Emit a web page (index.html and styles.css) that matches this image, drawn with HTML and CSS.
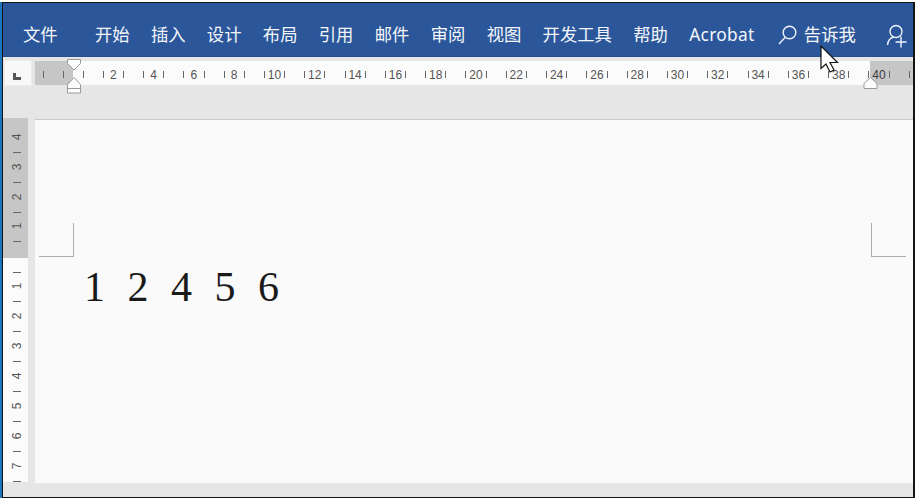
FILE: index.html
```html
<!DOCTYPE html>
<html lang="zh-CN">
<head>
<meta charset="utf-8">
<title>Word</title>
<link rel="stylesheet" href="styles.css">
</head>
<body>
<div class="shell">
  <div class="window">
    <nav class="tabs">
      <span class="tab tab-file">文件</span>
      <span class="tab">开始</span>
      <span class="tab">插入</span>
      <span class="tab">设计</span>
      <span class="tab">布局</span>
      <span class="tab">引用</span>
      <span class="tab">邮件</span>
      <span class="tab">审阅</span>
      <span class="tab">视图</span>
      <span class="tab">开发工具</span>
      <span class="tab">帮助</span>
      <span class="tab tab-latin">Acrobat</span>
      <span class="tell">
        <svg class="icon-search" viewBox="0 0 20 20" width="20" height="20"><circle cx="11.500" cy="7.500" r="6.300"/><path d="M7 12.500L1 19"/></svg>
        <span class="tab">告诉我</span>
      </span>
      <svg class="icon-person" viewBox="0 0 24 24" width="24" height="24"><circle cx="10" cy="7.500" r="6"/><path d="M1.500 21c.5-4.500 3-7 6-7.700M15 12.500v11M9.500 18h11"/></svg>
    </nav>
    <div class="ruler-row">
      <div class="tabstop"><span class="tabstop-mark"></span></div>
      <svg class="hruler" viewBox="35 57 878 61" width="878" height="61">
        <rect class="r-white" x="35" y="61" width="835" height="24"/>
        <rect class="r-gray" x="35" y="61" width="38" height="24"/>
        <rect class="r-gray" x="870" y="61" width="43" height="24"/>
        <path class="r-tick" d="M43.500 71v7M63.500 71v7M83.500 71v7M103.500 71v7M123.500 71v7M143.500 71v7M163.500 71v7M183.500 71v7M204.500 71v7M224.500 71v7M244.500 71v7M264.500 71v7M284.500 71v7M304.500 71v7M324.500 71v7M345.500 71v7M365.500 71v7M385.500 71v7M405.500 71v7M425.500 71v7M445.500 71v7M465.500 71v7M486.500 71v7M506.500 71v7M526.500 71v7M546.500 71v7M566.500 71v7M586.500 71v7M607.500 71v7M627.500 71v7M647.500 71v7M667.500 71v7M687.500 71v7M707.500 71v7M727.500 71v7M748.500 71v7M768.500 71v7M788.500 71v7M808.500 71v7M828.500 71v7M848.500 71v7M868.500 71v7M889.500 71v7M909.500 71v7"/>
        <g class="r-num">
          <text x="113.300" y="78.500">2</text><text x="153.600" y="78.500">4</text><text x="193.900" y="78.500">6</text><text x="234.200" y="78.500">8</text><text x="274.500" y="78.500">10</text><text x="314.800" y="78.500">12</text><text x="355.100" y="78.500">14</text><text x="395.400" y="78.500">16</text><text x="435.700" y="78.500">18</text><text x="476" y="78.500">20</text><text x="516.300" y="78.500">22</text><text x="556.600" y="78.500">24</text><text x="596.900" y="78.500">26</text><text x="637.200" y="78.500">28</text><text x="677.500" y="78.500">30</text><text x="717.800" y="78.500">32</text><text x="758.100" y="78.500">34</text><text x="798.400" y="78.500">36</text><text x="838.700" y="78.500">38</text><text class="r-num-dark" x="879" y="78.500">40</text>
        </g>
        <path class="r-marker" d="M67.500 59.500h13v4l-6.500 6.500l-6.500-6.500z"/>
        <path class="r-marker" d="M74 77.500l6.500 7v8.500h-13v-8.500z"/>
        <path class="r-marker" d="M67.500 88.500h13"/>
        <path class="r-marker" d="M870.500 77.500l6.500 6v5h-13v-5z"/>
      </svg>
    </div>
    <div class="main">
      <svg class="vruler" viewBox="3 118 25 364" width="25" height="364">
        <rect class="r-white" x="3" y="118" width="25" height="364"/>
        <rect class="r-gray" x="3" y="118" width="25" height="140"/>
        <path class="r-tick" d="M13 152.500h8M13 182.500h8M13 212.500h8M13 241.500h8M13 272.500h8M13 301.500h8M13 331.500h8M13 361.500h8M13 391.500h8M13 421.500h8M13 451.500h8M13 481.500h8"/>
        <g class="r-num">
          <text transform="translate(21 137) rotate(-90)">4</text>
          <text transform="translate(21 167) rotate(-90)">3</text>
          <text transform="translate(21 197) rotate(-90)">2</text>
          <text transform="translate(21 226) rotate(-90)">1</text>
          <text transform="translate(21 286) rotate(-90)">1</text>
          <text transform="translate(21 316) rotate(-90)">2</text>
          <text transform="translate(21 346) rotate(-90)">3</text>
          <text transform="translate(21 376) rotate(-90)">4</text>
          <text transform="translate(21 406) rotate(-90)">5</text>
          <text transform="translate(21 436) rotate(-90)">6</text>
          <text transform="translate(21 466) rotate(-90)">7</text>
        </g>
      </svg>
      <div class="page">
        <div class="crops">
          <span class="crop crop-left"></span>
          <span class="crop crop-right"></span>
        </div>
        <div class="digits">
          <span>1</span><span>2</span><span>4</span><span>5</span><span>6</span>
        </div>
      </div>
    </div>
  </div>
</div>
<svg class="cursor" viewBox="0 0 20 30" width="20" height="30"><path d="M1 1v22.500l5-4.500l4 8l4-2l-4-7.500h7.500z"/></svg>
</body>
</html>
```
FILE: styles.css
```css
* { box-sizing: border-box; }
html, body { margin: 0; padding: 0; background: #fff; }
body { width: 916px; height: 500px; overflow: hidden; position: relative; }

.shell {
  width: 915px;
  height: 496px;
  margin-top: 2px;
  border-left: 2px solid #1b76bd;
}
.window {
  width: 913px;
  height: 496px;
  border: 1px solid #141414;
  border-right-width: 2px;
  background: #e6e6e6;
  display: flex;
  flex-direction: column;
}

.tabs {
  height: 54px;
  flex: none;
  background: #2b579a;
  border-bottom: 1px solid #26508f;
  display: flex;
  align-items: center;
  gap: 21.300px;
  padding: 8px 0 0 20px;
  color: #f4f6fa;
  font: 17.330px/24px "Noto Sans CJK SC", "Noto Sans", sans-serif;
}
.tab { white-space: nowrap; }
.tab-file { margin-right: 16px; }
.tab-latin { font-family: "Noto Sans", sans-serif; letter-spacing: 0.300px; }
.tell { display: flex; align-items: center; gap: 6px; margin-left: 2px; }
.icon-search { fill: none; stroke: #f0f3f8; stroke-width: 1.400; margin-top: 2px; }
.icon-person { fill: none; stroke: #f0f3f8; stroke-width: 1.400; margin: 5px 0 0 8.700px; }

.ruler-row { display: flex; height: 61px; flex: none; position: relative; }
.tabstop {
  width: 28px;
  height: 26px;
  margin: 3px 0 0 1px;
  background: #f8f8f8;
  border: 1px solid #eee;
  position: relative;
  flex: none;
}
.tabstop-mark {
  display: block;
  width: 8px;
  height: 7px;
  margin: 12px 0 0 8px;
  border-left: 3px solid #555;
  border-bottom: 3px solid #555;
}
.hruler { margin-left: 3px; display: block; flex: none; overflow: visible; }

.r-white { fill: #fbfbfb; }
.r-gray { fill: #c6c6c6; }
.r-tick { fill: none; stroke: #666; stroke-width: 1; }
.r-num { font: 12px "Liberation Sans", sans-serif; fill: #555; text-anchor: middle; }
.r-num-dark { fill: #3c3c3c; }
.r-marker { fill: #fdfdfd; stroke: #9a9a9a; stroke-width: 1; }

.main { display: flex; flex: none; height: 379px; }
.vruler { display: block; flex: none; margin-right: 7px; }
.page {
  flex: 1;
  height: 364px;
  background: #fafafa;
  border-top: 1px solid #c9c9c9;
  margin-top: 1px;
  padding-top: 103px;
}
.crops {
  display: flex;
  justify-content: space-between;
  padding: 0 7px 0 4px;
}
.crop { display: block; width: 35px; height: 34px; border-bottom: 1px solid #ababab; }
.crop-left { border-right: 1px solid #ababab; }
.crop-right { border-left: 1px solid #ababab; }
.digits {
  display: flex;
  gap: 22.500px;
  margin: 6px 0 0 49px;
  font: 42px/48px "Liberation Serif", serif;
  color: #1a1a1a;
}

.cursor { position: absolute; left: 820px; top: 45px; fill: #fff; stroke: #111; stroke-width: 1.200; }
```
